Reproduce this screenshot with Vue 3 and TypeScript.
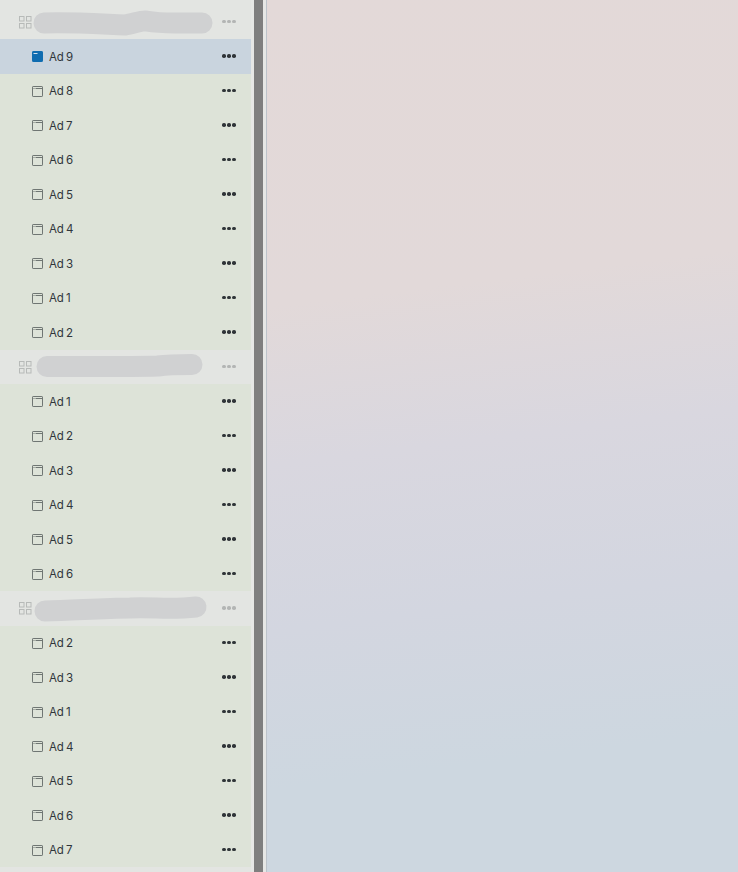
<script setup lang="ts">
interface Group {
  id: number
  blob: string
  ads: string[]
}

const groups: Group[] = [
  {
    id: 1,
    // wobbly redaction stroke over the group name
    blob: 'M14 16 C40 15 70 17 95 18 C103 17 112 13 116 14 C122 15 132 16 145 16 L172 16',
    ads: ['Ad 9', 'Ad 8', 'Ad 7', 'Ad 6', 'Ad 5', 'Ad 4', 'Ad 3', 'Ad 1', 'Ad 2'],
  },
  {
    id: 2,
    blob: 'M17 14.5 C50 14.5 90 15 128 14 C135 13 150 12.5 162 12.5',
    ads: ['Ad 1', 'Ad 2', 'Ad 3', 'Ad 4', 'Ad 5', 'Ad 6'],
  },
  {
    id: 3,
    blob: 'M15 18 C40 18 70 15 100 15 C125 14 140 17 166 14',
    ads: ['Ad 2', 'Ad 3', 'Ad 1', 'Ad 4', 'Ad 5', 'Ad 6', 'Ad 7'],
  },
]

const isSelected = (g: Group, ad: string) => g.id === 1 && ad === 'Ad 9'
</script>

<template>
  <div class="page">
    <aside class="sidebar">
      <section v-for="g in groups" :key="g.id" class="group">
        <header class="group-head">
          <svg class="grid-icon" width="13" height="13" viewBox="0 0 13 13">
            <rect x="0.5" y="0.5" width="4.5" height="4.5" />
            <rect x="7.5" y="0.5" width="4.5" height="4.5" />
            <rect x="0.5" y="7.5" width="4.5" height="4.5" />
            <rect x="7.5" y="7.5" width="4.5" height="4.5" />
          </svg>
          <svg class="blob" width="190" height="30" viewBox="0 0 190 30">
            <path :d="g.blob" />
          </svg>
          <span class="dots dots-dim"><i></i><i></i><i></i></span>
        </header>
        <div
          v-for="ad in g.ads"
          :key="ad"
          class="row"
          :class="{ selected: isSelected(g, ad) }"
        >
          <svg class="ad-icon" width="11" height="11" viewBox="0 0 11 11">
            <rect class="frame" x="0.5" y="0.5" width="10" height="10" rx="0.6" />
            <path class="bar" d="M3.5 2.5H10.5" />
            <rect class="pip" x="1.5" y="2" width="1" height="1" />
          </svg>
          <span class="label">{{ ad }}</span>
          <span class="dots"><i></i><i></i><i></i></span>
        </div>
      </section>
    </aside>
    <div class="gutter"><div class="handle"></div></div>
    <main class="canvas"></main>
  </div>
</template>

<style scoped>
.page {
  display: flex;
  width: 738px;
  height: 872px;
  overflow: hidden;
  font-family: Inter, "Liberation Sans", sans-serif;
  background: #e4e6e3;
}

.sidebar {
  width: 251px;
  flex: none;
  padding-top: 4.5px;
  background: #e3e5e2;
}

.group-head {
  display: flex;
  align-items: center;
  height: 34.5px;
  padding-left: 19px;
  background: #e3e5e2;
  position: relative;
}

.grid-icon {
  margin-top: 1px;
}

.grid-icon rect {
  fill: none;
  stroke: #b7bab8;
  stroke-width: 1;
}

.blob {
  position: absolute;
  left: 30px;
  top: 2px;
  filter: blur(0.6px);
}

.blob path {
  fill: none;
  stroke: #d0d1d2;
  stroke-width: 21;
  stroke-linecap: round;
}

.row {
  display: flex;
  align-items: center;
  height: 34.5px;
  padding-left: 32px;
  background: #dde3d8;
  position: relative;
}

.row.selected {
  background: #c9d4de;
}

.ad-icon {
  flex: none;
  margin: 1px 6px 0 0;
}

.frame {
  fill: none;
  stroke: #6f7673;
}

.bar {
  fill: none;
  stroke: #6f7673;
}

.pip {
  fill: #6f7673;
}

.selected .frame {
  fill: #0f6cb0;
  stroke: #0f6cb0;
}

.selected .bar {
  stroke: none;
}

.selected .pip {
  fill: #cfe0ee;
  width: 4px;
}

.label {
  margin-top: 1px;
  font-size: 11.5px;
  letter-spacing: -0.3px;
  word-spacing: -0.2px;
  color: #30363b;
}

.dots {
  position: absolute;
  left: 222px;
  top: 50%;
  margin-top: -2px;
  display: flex;
  gap: 1.5px;
}

.dots i {
  width: 3.5px;
  height: 3.5px;
  border-radius: 50%;
  background: #2f3438;
}

.dots-dim i {
  background: #b3b5b4;
}

.gutter {
  flex: none;
  padding: 0 3px;
  border-right: 1px solid #bcc3ca;
  box-sizing: border-box;
  width: 16px;
  background: #e6e7e5;
}

.handle {
  width: 9px;
  height: 100%;
  background: #7f7f7f;
}

.canvas {
  flex: 1;
  background: linear-gradient(173deg, #e3d9d8 0%, #e2d9d9 33%, #d9d7df 50%, #d3d6e0 68%, #cdd7e0 85%, #cdd7e0 100%);
}
</style>
